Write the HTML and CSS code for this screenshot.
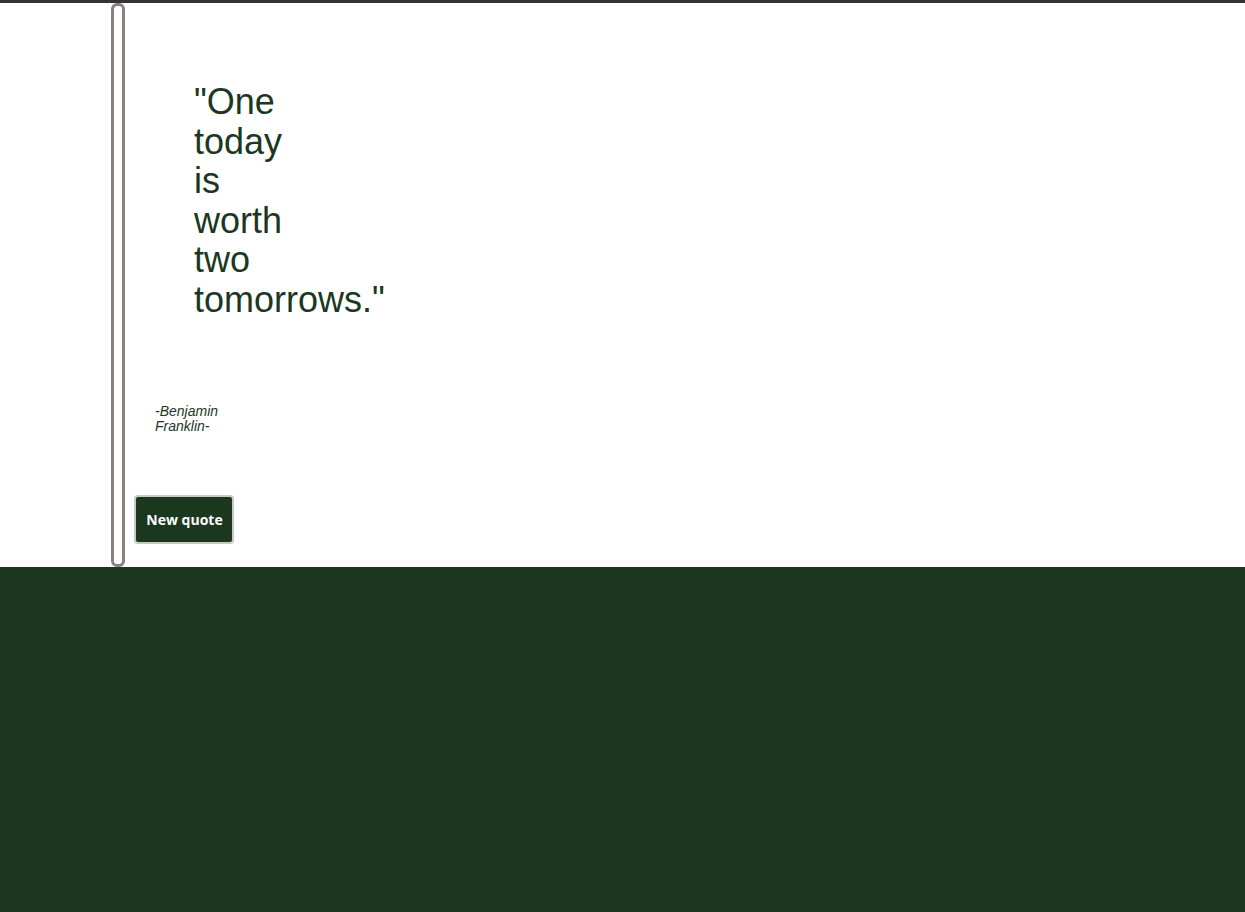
FILE: index.html
```html
<!DOCTYPE html>
<html>
<head>
<meta charset="utf-8">
<link rel="stylesheet" href="styles.css">
</head>
<body>
<div class="topbar"></div>
<main class="page">
  <div class="wrapper">
    <div class="quote-box">
      <div class="quote-inner">
        <p class="quote-text">"One today is worth two tomorrows."</p>
        <p class="quote-author">-Benjamin Franklin-</p>
        <button class="new-quote">New quote</button>
      </div>
    </div>
  </div>
</main>
<footer class="bottom"></footer>
</body>
</html>
```
FILE: styles.css
```css
* { box-sizing: border-box; }
html, body { margin: 0; padding: 0; }
body {
  background: #1b381f;
  font-family: "Liberation Sans", Arial, sans-serif;
  color: #1b381f;
}
.topbar {
  height: 3px;
  background: #333333;
}
.page {
  background: #ffffff;
  height: 564px;
  display: flex;
}
.wrapper {
  padding-left: 111px;
  display: flex;
}
.quote-box {
  width: 14px;
  height: 564px;
  border: 3px solid #8e7f7f;
  border-radius: 6px;
  display: flex;
  flex-direction: column;
}
.quote-inner {
  width: 0;
  padding-left: 21px;
  display: flex;
  flex-direction: column;
  align-items: flex-start;
}
.quote-text {
  margin: 76px 0 0 59px;
  font-size: 36px;
  line-height: 39.6px;
  width: 10px;
}
.quote-author {
  margin: 84px 0 0 20px;
  font-size: 14px;
  line-height: 15px;
  font-style: italic;
  width: 66px;
  flex: none;
}
.new-quote {
  margin-top: 61px;
  margin-left: -1px;
  width: 100px;
  height: 49px;
  flex: none;
  background: #1b381f;
  color: #ffffff;
  border: 2px solid #c8c8c8;
  border-radius: 4px;
  font-family: "Open Sans", sans-serif;
  font-weight: 700;
  font-size: 14px;
  padding: 0 0 0 1px;
  white-space: nowrap;
}
.bottom {
  height: 345px;
  background: #1b381f;
}
```
